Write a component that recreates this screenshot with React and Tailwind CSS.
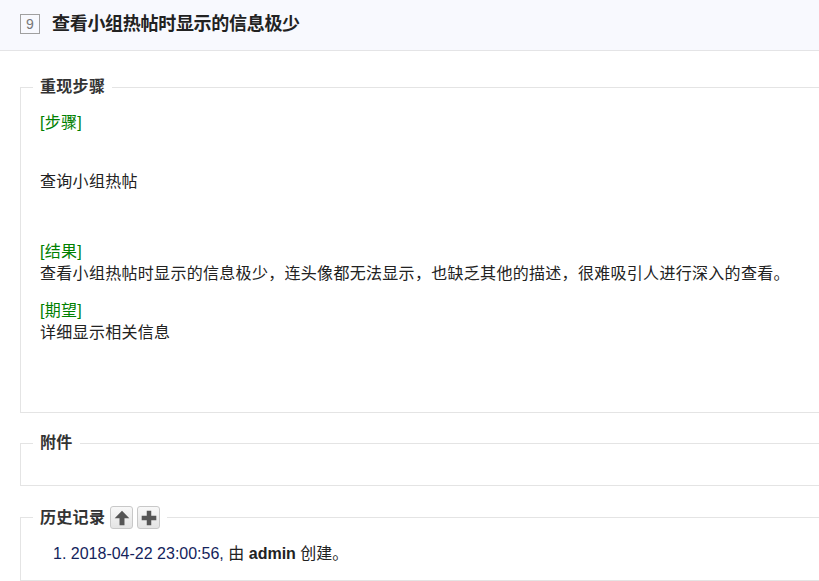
import React from "react";

const font = {
  fontFamily: '"Liberation Sans", "Noto Sans CJK SC", sans-serif',
};

const UpIcon = () => (
  <svg width="18" height="18" viewBox="0 0 16 16">
    <path d="M8 1.5 L14.5 8.2 L10.2 8.2 L10.2 14.5 L5.8 14.5 L5.8 8.2 L1.5 8.2 Z" fill="#555" />
  </svg>
);

const PlusIcon = () => (
  <svg width="18" height="18" viewBox="0 0 16 16">
    <path d="M6 1.5 H10 V6 H14.5 V10 H10 V14.5 H6 V10 H1.5 V6 H6 Z" fill="#555" />
  </svg>
);

const IconButton = ({ children }) => (
  <button className="w-[23px] h-[23px] flex items-center justify-center rounded-[3px] border border-[#c8c8c8] bg-gradient-to-b from-[#f8f8f8] to-[#e4e4e4]">
    {children}
  </button>
);

const Tag = ({ children }) => (
  <div className="text-[#008000] leading-[22px]">[{children}]</div>
);

export default function App() {
  return (
    <div
      className="w-[819px] h-[581px] overflow-hidden bg-white text-[16px] text-[#222] tracking-[0.3px]"
      style={font}
    >
      {/* header */}
      <div className="h-[51px] bg-[#f8f9fe] border-b border-[#e4e4e6] flex items-center pl-[20px] pb-[2px]">
        <span className="w-[20px] h-[20px] border border-[#a0a0a0] flex items-center justify-center text-[14px] text-[#777] tracking-normal">
          9
        </span>
        <h1 className="ml-[12px] font-bold text-[18px] tracking-[-0.3px] text-[#222]">
          查看小组热帖时显示的信息极少
        </h1>
      </div>

      <div className="pl-[20px]">
        {/* steps */}
        <fieldset className="mt-[26px] border border-r-0 border-[#e4e4e4] px-[12px] pb-[68px]">
          <legend className="px-[7px] font-bold leading-[20px] text-[#333]">重现步骤</legend>
          <div className="pl-[7px] pt-[15px]">
            <Tag>步骤</Tag>
            <div className="mt-[37px] leading-[22px]">查询小组热帖</div>
            <div className="mt-[48px]">
              <Tag>结果</Tag>
              <div className="leading-[22px]">
                查看小组热帖时显示的信息极少，连头像都无法显示，也缺乏其他的描述，很难吸引人进行深入的查看。
              </div>
            </div>
            <div className="mt-[15px]">
              <Tag>期望</Tag>
              <div className="leading-[22px]">详细显示相关信息</div>
            </div>
          </div>
        </fieldset>

        {/* files */}
        <fieldset className="mt-[20px] border border-r-0 border-[#e4e4e4] px-[12px] pb-[32px]">
          <legend className="px-[7px] font-bold leading-[20px] text-[#333]">附件</legend>
        </fieldset>

        {/* history */}
        <fieldset className="mt-[20px] border border-r-0 border-[#e4e4e4] px-[12px] pb-[15px]">
          <legend className="px-[7px] h-[23px] flex items-center gap-[4px] text-[#333]">
            <span className="font-bold leading-[20px] mr-[1px]">历史记录</span>
            <IconButton>
              <UpIcon />
            </IconButton>
            <IconButton>
              <PlusIcon />
            </IconButton>
          </legend>
          <div className="pt-[14px] pl-[20px] leading-[22px] tracking-normal">
            <span className="text-[#14245c]">1. 2018-04-22 23:00:56,</span>{" "}
            <span>由</span> <b className="font-bold">admin</b> <span>创建。</span>
          </div>
        </fieldset>
      </div>
    </div>
  );
}
